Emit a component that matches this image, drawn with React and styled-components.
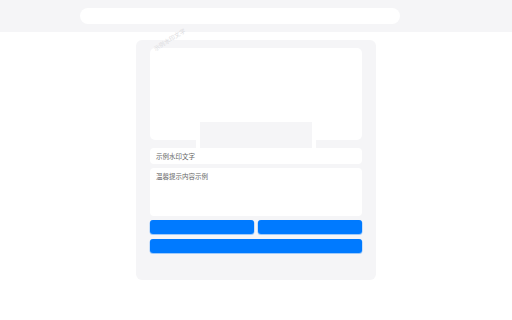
import React from "react";
import styled, { createGlobalStyle } from "styled-components";

const Global = createGlobalStyle`
  html, body { margin: 0; padding: 0; background: #fff; }
  body { font-family: "Noto Sans CJK SC", "Noto Sans", sans-serif; }
  * { box-sizing: border-box; }
`;

const Page = styled.div`
  width: 512px;
  height: 320px;
  display: flex;
  flex-direction: column;
  align-items: center;
`;

const TopBar = styled.div`
  width: 100%;
  height: 32px;
  background: #f5f5f7;
  display: flex;
  align-items: flex-start;
  padding: 8px 0 0 80px;
`;

const Search = styled.div`
  width: 320px;
  height: 16px;
  background: #fff;
  border-radius: 8px;
`;

const Card = styled.div`
  position: relative;
  margin-top: 8px;
  width: 240px;
  height: 240px;
  background: #f5f5f7;
  border-radius: 6px;
  padding: 8px 14px;
  display: flex;
  flex-direction: column;
`;

const Watermark = styled.span`
  position: absolute;
  left: 20px;
  top: 6px;
  font-size: 6px;
  line-height: 6px;
  color: #dcdce0;
  transform: rotate(-32deg);
  transform-origin: left bottom;
  white-space: nowrap;
  pointer-events: none;
  z-index: 2;
`;

const ImageArea = styled.div`
  position: relative;
  height: 92px;
  background: #fff;
  border-radius: 5px;
`;

const Caption = styled.div`
  position: absolute;
  left: 46px;
  top: 70px;
  width: 120px;
  height: 30px;
  background: #fff;
  padding: 4px 4px 0;
`;

const CaptionInner = styled.div`
  width: 100%;
  height: 100%;
  background: #f5f5f7;
`;

const Field = styled.div`
  margin-top: ${(p) => p.$gap}px;
  height: ${(p) => p.$h}px;
  background: #fff;
  border-radius: 4px;
  padding: ${(p) => p.$pad};
  font-size: 6.5px;
  line-height: 8px;
  color: #666;
`;

const ButtonRow = styled.div`
  margin-top: 4px;
  display: flex;
  gap: 4px;
`;

const Button = styled.button`
  flex: 1;
  margin-top: ${(p) => p.$gap || 0}px;
  height: 14px;
  border: none;
  border-radius: 3px;
  background: #007aff;
  box-shadow: 0 0.5px 0 0.5px rgba(0, 122, 255, 0.35);
  padding: 0;
`;

export default function App() {
  return (
    <>
      <Global />
      <Page>
        <TopBar>
          <Search />
        </TopBar>
        <Card>
          <Watermark>示例水印文字</Watermark>
          <ImageArea>
            <Caption>
              <CaptionInner />
            </Caption>
          </ImageArea>
          <Field $gap={8} $h={16} $pad="4px 6px">示例水印文字</Field>
          <Field $gap={4} $h={48} $pad="4px 6px">温馨提示内容示例</Field>
          <ButtonRow>
            <Button />
            <Button />
          </ButtonRow>
          <ButtonRow>
            <Button $gap={1} />
          </ButtonRow>
        </Card>
      </Page>
    </>
  );
}
